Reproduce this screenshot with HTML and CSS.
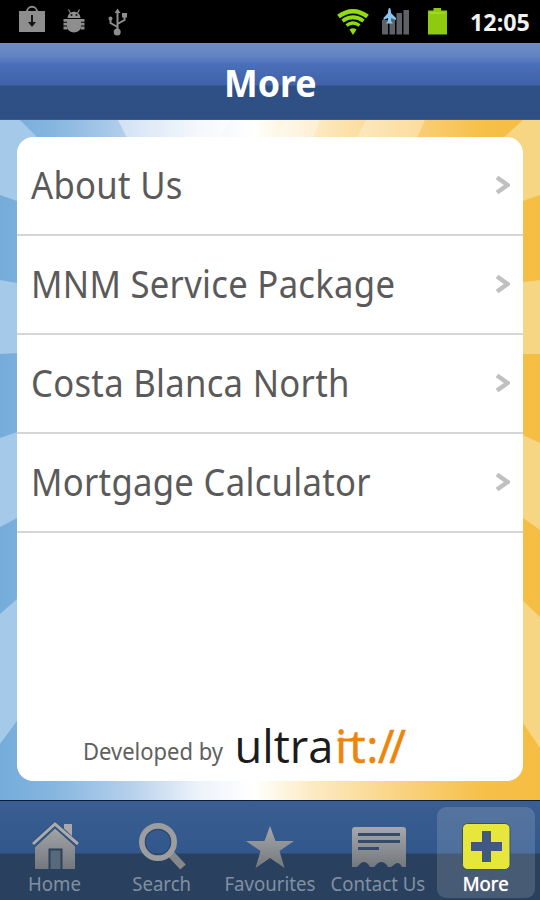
FILE: index.html
```
<!DOCTYPE html>
<html lang="en">
<head>
<meta charset="utf-8">
<title>More</title>
<link rel="stylesheet" href="styles.css">
</head>
<body>
<div class="screen">
  <div class="status">
    <svg class="status-icons" width="470" height="43" viewBox="0 0 470 43">
      <path d="M19 11H45V32H19Z" fill="#8e8e8e"/>
      <path d="M27 12C27 5 37 5 37 12" fill="none" stroke="#8e8e8e" stroke-width="1.8"/>
      <path d="M31 15H33V22H36L32 27L28 22H31Z" fill="#151515"/>
      <g fill="#8e8e8e" stroke="#8e8e8e">
        <path d="M67.500 18C68 9.500 80 9.500 80.500 18Z" stroke="none"/>
        <path d="M70.500 13L68.500 9.500M77.500 13L79.500 9.500" stroke-width="1.200"/>
        <path d="M67 19H81V26C81 34.500 67 34.500 67 26Z" stroke="none"/>
        <path d="M65.500 19V29.500M82.500 19V29.500" fill="none" stroke-width="4" stroke-dasharray="2.800 1"/>
        <circle cx="71.500" cy="15" r="1" fill="#111" stroke="none"/><circle cx="76.500" cy="15" r="1" fill="#111" stroke="none"/>
      </g>
      <g fill="#8e8e8e">
        <path d="M117.500 33V11M117.500 27L110.500 23V19M117.500 24L124.500 20V16" fill="none" stroke="#8e8e8e" stroke-width="2"/>
        <path d="M114.500 13L117.500 8.500L120.500 13Z"/><circle cx="110.500" cy="18.500" r="2"/><path d="M122 13H127V17.500H122Z"/><circle cx="117.200" cy="32" r="3.500"/>
      </g>
      <g fill="none" stroke="#8fdc10" stroke-width="4.600">
        <path d="M338.500 16.500Q353 6 367.500 16.500"/>
        <path d="M342.500 21Q353 13.500 363.500 21" stroke-width="3.800"/>
        <path d="M346.500 25.500Q353 20.500 359.500 25.500" stroke-width="3.400"/>
        <path d="M349.500 29.500L353 35L356.500 29.500Q353 27 349.500 29.500Z" fill="#8fdc10" stroke="none"/>
      </g>
      <path d="M382 20H388V34.500H382ZM389.500 17H395V34.500H389.500ZM396.500 13H402V34.500H396.500ZM403.500 10H409V34.500H403.500Z" fill="#5e6266"/>
      <path d="M389.500 8C390.500 8 391 10 391 13L396 18V20L391 18V21L393 23.500H386L388 21V18L383.500 20V18L388 13C388 10 388.500 8 389.500 8Z" fill="#86c5f4"/>
      <path d="M428 10.500H433.500V8H441V10.500H447V34.500H428Z" fill="#8dca10"/>
      <path d="M429.500 12H445V14H429.500Z" fill="#a0d922"/>
    </svg>
    <span class="clock">12:05</span>
  </div>
  <header class="header"><h1>More</h1></header>
  <main class="content">
    <svg class="rays" width="540" height="680" viewBox="0 0 540 680">
      <defs>
        <linearGradient id="sky" x1="0" x2="1"><stop offset="0" stop-color="#74acda"/><stop offset=".1" stop-color="#86b6df"/><stop offset=".24" stop-color="#b5d0ec"/><stop offset=".37" stop-color="#eef3fa"/><stop offset=".47" stop-color="#fff"/><stop offset=".57" stop-color="#fdecc8"/><stop offset=".76" stop-color="#f9d07a"/><stop offset=".9" stop-color="#f6bf48"/><stop offset="1" stop-color="#f5bd42"/></linearGradient>
      </defs>
      <path d="M0 0H540V680H0Z" fill="url(#sky)"/>
      <path d="M0 0H20L38 18V40H17V81L0 75ZM0 160L17 163V233L0 234ZM0 318L17 312V398L0 407ZM0 494L17 479V601L0 624Z" fill="#a5c9e8"/>
      <path d="M118 0H230L220 18H127Z" fill="#fff" opacity=".45"/>
      <path d="M425 0H366L357 18H417ZM320 0H285L277 18H313Z" fill="#fff" opacity=".3"/>
      <path d="M540 0H523L503 18V40H523V81L540 75ZM540 160L523 162V234H540ZM540 323L523 315V398L540 410ZM540 497L523 481V603L540 628Z" fill="#f6d583"/>
    </svg>
    <section class="card">
      <ul class="list">
        <li><span>About Us</span><svg width="15" height="20" viewBox="0 0 15 20"><path d="M2 2.500L12.500 10L2 17.500"/></svg></li>
        <li><span>MNM Service Package</span><svg width="15" height="20" viewBox="0 0 15 20"><path d="M2 2.500L12.500 10L2 17.500"/></svg></li>
        <li><span>Costa Blanca North</span><svg width="15" height="20" viewBox="0 0 15 20"><path d="M2 2.500L12.500 10L2 17.500"/></svg></li>
        <li><span>Mortgage Calculator</span><svg width="15" height="20" viewBox="0 0 15 20"><path d="M2 2.500L12.500 10L2 17.500"/></svg></li>
      </ul>
      <svg class="credit" width="340" height="81" viewBox="80 699 340 81">
        <text class="by" x="83" y="759" textLength="140" lengthAdjust="spacingAndGlyphs">Developed by</text>
        <text class="brand" x="234.500" y="762" textLength="99" lengthAdjust="spacingAndGlyphs">ultra</text>
        <text class="brand accent" x="335.500 349.500 366.500 378 389.500" y="762">it://</text>
        <path d="M337.500 737.500H352V740.500H337.500Z" fill="#ee8408"/>
      </svg>
    </section>
  </main>
  <nav class="tabs">
    <svg class="defs" width="0" height="0"><defs><linearGradient id="metal" x1="0" y1="0" x2="0" y2="1"><stop offset="0" stop-color="#a6a8aa"/><stop offset="1" stop-color="#74787e"/></linearGradient></defs></svg>
    <a class="tab"><svg width="60" height="56" viewBox="24 816 60 56">
      <path d="M55 825L35 845V869H75V845Z" fill="url(#metal)"/>
      <path d="M64 826H72V840L64 832Z" fill="#a6a8aa"/>
      <path d="M33 845L55 824.500L78 845" fill="none" stroke="#34517c" stroke-width="6"/>
      <path d="M33 844L55 824L78 844" fill="none" stroke="#a9abad" stroke-width="3"/>
      <path d="M64 824H72V836L68 832V828H64Z" fill="#a6a8aa"/>
      <path d="M49.500 869V849.500H61.500V869" fill="#59697c" stroke="#2c4159" stroke-width="2"/>
    </svg><span>Home</span></a>
    <a class="tab"><svg width="60" height="56" viewBox="132 816 60 56">
      <path d="M170 853L183 867" stroke="#858789" stroke-width="7.500" fill="none"/>
      <circle cx="158" cy="842" r="16" fill="none" stroke="#9b9d9e" stroke-width="6"/>
      <circle cx="158" cy="842" r="12.700" fill="none" stroke="#2f486e" stroke-width="1.200"/>
    </svg><span>Search</span></a>
    <a class="tab"><svg width="60" height="56" viewBox="240 816 60 56">
      <path d="M270 826L275.500 841H294L279.500 851L284.500 868L270 858L255.500 868L260.500 851L246 841H264.500Z" fill="url(#metal)"/>
    </svg><span>Favourites</span></a>
    <a class="tab"><svg width="60" height="56" viewBox="348 816 60 56">
      <path d="M355 827H403Q406 827 406 830V867H402Q399 861 395 864L391 867H388Q384 860 378 863L374 867H370Q366 860 361 863L357 867H352V830Q352 827 355 827Z" fill="url(#metal)"/>
      <path d="M358 834.500H400M358 841.500H400M358 848.500H379" stroke="#344b6a" stroke-width="3"/>
    </svg><span>Contact Us</span></a>
    <a class="tab active"><svg width="60" height="56" viewBox="456 816 60 56">
      <rect x="462.500" y="823.500" width="47.500" height="46" rx="5" fill="#e7e63b" stroke="#34517c"/>
      <path d="M482 831H491V842H502V851H491V862H482V851H471V842H482Z" fill="#41597e"/>
    </svg><span>More</span></a>
  </nav>
</div>
</body>
</html>
```

FILE: styles.css
```
* { box-sizing: border-box; }
body { margin: 0; font-family: "Noto Sans", "Open Sans", sans-serif; }
.screen { width: 540px; height: 900px; display: flex; flex-direction: column; overflow: hidden; }
.status { height: 43px; background: #000; display: flex; align-items: center; }
.status-icons { flex: none; }
.clock { color: #f2f2f2; font-size: 24px; font-weight: 700; line-height: 43px; transform: scaleX(.97); transform-origin: left; }
.header { height: 77px; border-top: 1px solid #778bb5; border-bottom: 1px solid #405a88; background: linear-gradient(#6d8cc8 0, #6483c2 12px, #4a70b9 20px, #3f62a9 41px, #2f5085 42px, #2f5085 100%); display: flex; justify-content: center; }
h1 { margin: 0; color: #fff; font-size: 38px; font-weight: 700; line-height: 77px; transform: scaleX(.94); }
.content { height: 679px; position: relative; padding: 17px; }
.rays { position: absolute; left: 0; top: 0; }
.card { position: relative; height: 644px; background: #fff; border-radius: 16px; display: flex; flex-direction: column; justify-content: space-between; }
.list { list-style: none; margin: 0; padding: 0; }
.list li { height: 99px; border-bottom: 2px solid #d6d6d6; display: flex; align-items: center; justify-content: space-between; padding: 0 13px 2px 14px; color: #5a5a5a; font-size: 37.5px; letter-spacing: .3px; white-space: nowrap; }
.list span { transform: scaleX(.925); transform-origin: left; }
.list path { fill: none; stroke: #c0c0c0; stroke-width: 4.5; }
.credit { margin-left: 63px; }
.by { font-size: 24px; fill: #606060; }
.brand { font-family: "Open Sans", "Noto Sans", sans-serif; font-size: 45px; fill: #1c1c1c; }
.accent { fill: #ee8408; stroke: #ee8408; stroke-width: .7px; }
.tabs { flex: 1; border-top: 2px solid #0c1d3c; background: linear-gradient(#3a5e91, #32578c 52px, #29415f 53px, #29415f); display: flex; }
.defs { position: absolute; }
.tab { width: 108px; display: flex; flex-direction: column; align-items: center; padding-top: 15px; color: #8290a2; font-size: 20px; line-height: 24px; white-space: nowrap; border-radius: 9px; }
.tab svg { flex: none; }
.tab span { transform: scaleX(.93); }
.tab.active { width: 98px; margin: 6px 5px 2px; padding-top: 9px; background: rgba(255,255,255,.14); color: #fff; text-shadow: 0 0 1px #fff; }
```
